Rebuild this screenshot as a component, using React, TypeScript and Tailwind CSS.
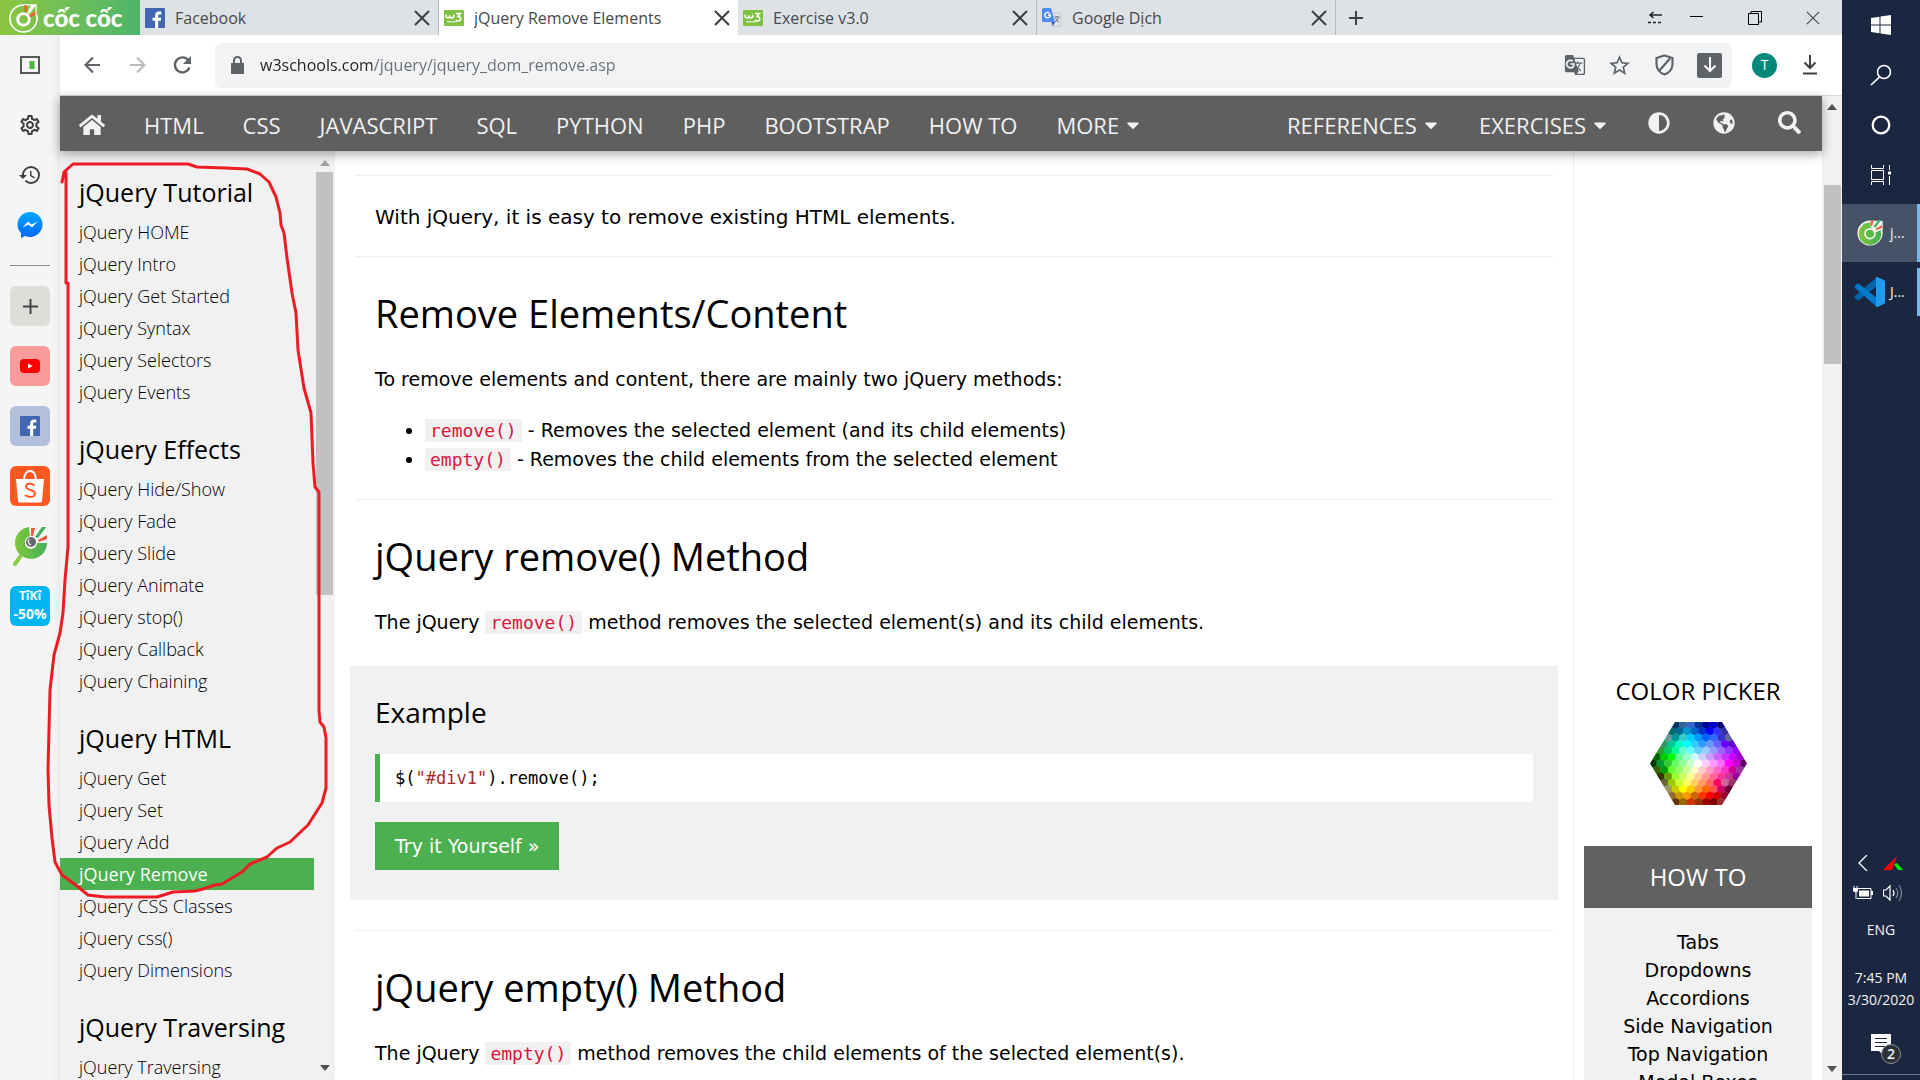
import React from "react";
import { FaHome, FaAdjust, FaGlobeAmericas, FaSearch, FaCaretDown } from "react-icons/fa";
import { MdGTranslate, MdStarBorder, MdHistory, MdOutlineSettings } from "react-icons/md";

const UI = "font-['Open_Sans','Noto_Sans',sans-serif]";
const BODY = "font-['DejaVu_Sans',sans-serif]";

const pickerRows = [
  "003366 336699 3366CC 003399 000099 0000CC 000066",
  "006666 006699 0099CC 0066CC 0033CC 0000FF 3333FF 333399",
  "669999 009999 33CCCC 00CCFF 0099FF 0066FF 3366FF 3333CC 666699",
  "339966 00CC99 00FFCC 00FFFF 33CCFF 3399FF 6699FF 6666FF 6600FF 6600CC",
  "339933 00CC66 00FF99 66FFCC 66FFFF 66CCFF 99CCFF 9999FF 9966FF 9933FF 9900FF",
  "006600 00CC00 00FF00 66FF99 99FFCC CCFFFF CCCCFF CC99FF CC66FF CC33FF CC00FF 9900CC",
  "003300 009933 33CC33 66FF66 99FF99 CCFFCC FFFFFF FFCCFF FF99FF FF66FF FF00FF CC00CC 660066",
  "336600 009900 66FF33 99FF66 CCFF99 FFFFCC FFCCCC FF99CC FF66CC FF33CC CC0099 993399",
  "333300 669900 99FF33 CCFF66 FFFF99 FFCC99 FF9999 FF6699 FF3399 CC3399 990099",
  "666633 99CC00 CCFF33 FFFF66 FFCC66 FF9966 FF6666 FF0066 CC6699 993366",
  "999966 CCCC00 FFFF00 FFCC00 FF9933 FF6600 FF5050 CC0066 660033",
  "996633 CC9900 FF9900 CC6600 FF3300 FF0000 CC0000 990033",
  "663300 996600 CC3300 993300 990000 800000 993333",
].map((r) => r.split(" "));

function ColorHexagon() {
  const w = 7.6;
  const h = 6.45;
  const cells: React.ReactNode[] = [];
  pickerRows.forEach((row, r) => {
    const cy = 41.5 + (r - 6) * h;
    row.forEach((c, i) => {
      const cx = 48.5 + (i - (row.length - 1) / 2) * w;
      cells.push(
        <polygon
          key={r + "-" + i}
          fill={"#" + c}
          points={`${cx},${cy - 4.5} ${cx + 4},${cy - 2.2} ${cx + 4},${cy + 2.2} ${cx},${cy + 4.5} ${cx - 4},${cy + 2.2} ${cx - 4},${cy - 2.2}`}
        />
      );
    });
  });
  return (
    <svg width="97" height="83" viewBox="0 0 97 83" aria-hidden="true">
      <defs>
        <clipPath id="hexClip">
          <polygon points="25,0 72,0 97,41.5 72,83 25,83 0,41.5" />
        </clipPath>
      </defs>
      <g clipPath="url(#hexClip)">{cells}</g>
    </svg>
  );
}

function CocMark({ size = 31 }: { size?: number }) {
  return (
    <svg width={size} height={size} viewBox="0 0 32 32" className="shrink-0" aria-hidden="true">
      <circle cx="16" cy="17" r="14" fill="none" stroke="#fff" strokeWidth="1.6" />
      <path d="M17 3 30 2 30 14 20 15Z" fill="#86c846" />
      <circle cx="16" cy="18" r="6" fill="none" stroke="#fff" strokeWidth="3" />
      <path d="M17 3l3 0-1 8-2-1z" fill="#f05a28" />
      <path d="M24 3l5 0-7 9-2-1z" fill="#fff" />
      <path d="M29 9l1 3-7 4-1-2z" fill="#f05a28" />
      <path d="M18 3H29V14" fill="none" stroke="#fff" strokeWidth="1.2" />
    </svg>
  );
}

function CocEye({ size, handle }: { size: number; handle?: boolean }) {
  return (
    <svg width={size} height={size} viewBox="0 0 40 40" className="shrink-0" aria-hidden="true">
      <defs>
        <linearGradient id="cocG" x1="0" x2="1">
          <stop offset="0" stopColor="#7fc63c" />
          <stop offset="1" stopColor="#45b05a" />
        </linearGradient>
      </defs>
      {handle ? (
        <>
          <path d="M12 28 5 38" stroke="#8ccb45" strokeWidth="4" strokeLinecap="round" />
          <path d="M19 1A16 16 0 1 0 37 17L27 17A6 6 0 1 1 20 11Z" fill="url(#cocG)" />
          <circle cx="21" cy="16" r="6" fill="#fff" />
          <circle cx="21" cy="16" r="5" fill="#666a70" />
          <path d="M19 13a4 4 0 0 0 2 6" stroke="#ddd" fill="none" strokeWidth="1.5" />
        </>
      ) : (
        <>
          <path d="M21 2A18 18 0 1 0 38 19L37 3Z" fill="#f4f4ee" />
          <circle cx="20" cy="21" r="16" fill="url(#cocG)" />
          <path d="M21 11 20 3H38V15L28 19Z" fill="#f4f4ee" />
          <circle cx="20" cy="21" r="7" fill="#5cb947" stroke="#f4f4ee" strokeWidth="2.5" />
        </>
      )}
      <path d="M21 2h4l-2 8h-2z" fill="#f05a3c" />
      <path d="M32 1h4l-8 11-3-1z" fill="#3fae5a" />
      <path d="M37 9v4l-8 3-1-2z" fill="#f05a3c" />
    </svg>
  );
}

function FacebookLogo() {
  return (
    <svg width="20" height="20" viewBox="0 0 20 20" className="shrink-0" aria-hidden="true">
      <rect width="20" height="20" rx="1" fill="#4267b2" />
      <path d="M13.2 20v-7.3h2.6l.4-3h-3V7.9c0-.9.3-1.4 1.5-1.4h1.6V3.7c-.3 0-1.2-.1-2.3-.1-2.3 0-3.9 1.4-3.9 4v2.1H7.5v3h2.6V20z" fill="#fff" />
    </svg>
  );
}

function W3Logo() {
  return (
    <svg width="20" height="16" viewBox="0 0 20 16" className="shrink-0" aria-hidden="true">
      <rect width="20" height="16" rx="1" fill="#7fc242" />
      <path d="M2 4.5v1.8c0 2 3.7 2 3.7 0V5.2v1c0 2.1 4 2.1 4 0V4.5M12 3.5h4.5L14 6.5c3.500 0 3.600 4.500.5 4.500-1.200 0-2-.5-2.500-1.200" fill="none" stroke="#fff" strokeWidth="1.5" />
      <path d="M3 11.8h10" stroke="#fff" strokeWidth="1" />
    </svg>
  );
}

function TranslateLogo() {
  return (
    <svg width="20" height="20" viewBox="0 0 20 20" className="shrink-0" aria-hidden="true">
      <path d="M8 5h11v13h-9z" fill="#dfe1e3" stroke="#c5c8cc" />
      <path d="M0 1.5Q0 0 1.5 0H9l4 14H1.5Q0 14 0 12.5z" fill="#4e8cf5" />
      <path d="M9.5 14H13l-2 4z" fill="#3b50b5" />
      <path d="M8 5.5A2.8 2.8 0 1 0 8.5 7H6" fill="none" stroke="#fff" strokeWidth="1.3" />
      <path d="M12.5 9h5M15 8v1M16.5 9.5q-1 3-3.5 4.5M13.5 10.5q1 2.5 3.5 3.5" stroke="#6d7378" fill="none" />
    </svg>
  );
}

function Close({ size = 16, w = 2 }: { size?: number; w?: number }) {
  return (
    <svg width={size} height={size} viewBox="0 0 16 16" aria-hidden="true">
      <path d="M1 1 15 15M15 1 1 15" stroke="#3c4043" strokeWidth={w} />
    </svg>
  );
}

function Tab({ icon, label, active }: { icon: React.ReactNode; label: string; active?: boolean }) {
  return (
    <div className={"flex h-full w-[299px] shrink-0 items-center pl-[5px] pr-2 " + (active ? "bg-white" : "border-r border-[#9a9da1]/60")}>
      {icon}
      <a href="#tab" className="ml-2.5 flex-1 truncate text-base leading-6 text-[#45494d]">{label}</a>
      <button type="button" aria-label={"Close " + label}>
        <Close />
      </button>
    </div>
  );
}

function TabStrip() {
  return (
    <div className="flex h-[35px] shrink-0 items-center bg-[#dee1e6]">
      <a href="#home" className="flex h-full w-[140px] shrink-0 items-center gap-1 bg-linear-to-r from-[#8cc63f] to-[#4cb56a] pl-2 text-white">
        <CocMark />
        <span className="font-['Lato',sans-serif] text-2xl leading-8 font-black whitespace-nowrap">cốc cốc</span>
      </a>
      <Tab icon={<FacebookLogo />} label="Facebook" />
      <Tab icon={<W3Logo />} label="jQuery Remove Elements" active />
      <Tab icon={<W3Logo />} label="Exercise v3.0" />
      <Tab icon={<TranslateLogo />} label="Google Dịch" />
      <button type="button" aria-label="New tab" className="ml-3">
        <svg width="16" height="16" viewBox="0 0 16 16"><path d="M8 1v14M1 8h14" stroke="#3c4043" strokeWidth="2" /></svg>
      </button>
      <div className="ml-auto flex items-center gap-11 pr-[22px]">
        <button type="button" aria-label="Dock" className="-mr-4">
          <svg width="14" height="14" viewBox="0 0 14 14"><path d="M2 4h12M5.500 1 2 4l3.500 3M0 11.500h3M5 11.500h3M10 11.500h3" stroke="#222" strokeWidth="1.5" fill="none" /></svg>
        </button>
        <button type="button" aria-label="Minimize">
          <svg width="14" height="14" viewBox="0 0 14 14"><path d="M0 5.500h13" stroke="#000" /></svg>
        </button>
        <button type="button" aria-label="Restore">
          <svg width="14" height="14" viewBox="0 0 14 14"><path d="M.5 2.500h10v11H.5zM3 2V.5h10.500V11H11" stroke="#000" fill="none" /></svg>
        </button>
        <button type="button" aria-label="Close window">
          <Close size={14} w={1.2} />
        </button>
      </div>
    </div>
  );
}

function Toolbar() {
  const tool = "flex h-[25px] w-[25px] items-center justify-center";
  return (
    <div className="flex h-[61px] shrink-0 items-center border-b border-[#d8d8d8] bg-white pr-[25px]">
      <button type="button" aria-label="Back" className="ml-6">
        <svg width="16" height="18" viewBox="0 0 16 18"><path d="M16 9H2M9 1.5 1.5 9 9 16.5" stroke="#5f6368" strokeWidth="2.2" fill="none" /></svg>
      </button>
      <button type="button" aria-label="Forward" className="ml-[30px]">
        <svg width="16" height="18" viewBox="0 0 16 18"><path d="M0 9h14M7 1.5 14.5 9 7 16.5" stroke="#babcbe" strokeWidth="2.2" fill="none" /></svg>
      </button>
      <button type="button" aria-label="Reload" className="ml-[27px]">
        <svg width="19" height="20" viewBox="0 0 19 20"><path d="M16.5 12.5A7.5 7.5 0 1 1 15.5 5.5" stroke="#5f6368" strokeWidth="2.3" fill="none" /><path d="M18 1v8h-8z" fill="#5f6368" /></svg>
      </button>
      <div className="ml-[23px] flex h-[45px] flex-1 items-center rounded-md bg-[#f1f3f4] pl-4 pr-2.5">
        <svg width="13" height="18" viewBox="0 0 13 18" className="shrink-0" aria-hidden="true">
          <path d="M0 7h13v11H0z" fill="#5f6368" />
          <path d="M3 8V4.500a3.500 3.500 0 0 1 7 0V8" fill="none" stroke="#5f6368" strokeWidth="2" />
        </svg>
        <input
          aria-label="Address"
          readOnly
          value="w3schools.com/jquery/jquery_dom_remove.asp"
          className="ml-4 flex-1 bg-[linear-gradient(90deg,#202124_112px,#6a6e73_112px)] bg-clip-text text-base leading-6 text-transparent outline-none"
        />
        <div className="flex items-center gap-5 text-[#5f6368]">
          <button type="button" aria-label="Translate" className={tool}><MdGTranslate size={22} /></button>
          <button type="button" aria-label="Bookmark" className={tool}><MdStarBorder size={25} /></button>
          <button type="button" aria-label="Shield" className={tool}>
            <svg width="19" height="22" viewBox="0 0 19 22"><path d="M9.5 1.5 17.5 4v6c0 5-3.5 9-8 10.5C5 19 1.500 15 1.500 10V4zM15 4.500 4 17" fill="none" stroke="#5f6368" strokeWidth="2.2" /></svg>
          </button>
          <button type="button" aria-label="Save media" className={tool + " rounded-xs bg-[#5f6368]"}>
            <svg width="14" height="16" viewBox="0 0 14 16"><path d="M7 0v14M1.500 8.500 7 14l5.500-5.500" stroke="#fff" strokeWidth="2" fill="none" /></svg>
          </button>
        </div>
      </div>
      <button type="button" className="ml-5 flex h-[25px] w-[25px] items-center justify-center rounded-full bg-[#00897b] text-sm text-white">T</button>
      <button type="button" aria-label="Downloads" className="ml-[26px]">
        <svg width="14" height="20" viewBox="0 0 14 20"><path d="M7 0v13M1.5 7.5 7 13l5.500-5.500M0 18.500h14" stroke="#3c4043" strokeWidth="2" fill="none" /></svg>
      </button>
    </div>
  );
}

function AppRail() {
  const tile = "flex h-10 w-10 items-center justify-center rounded-md";
  return (
    <nav aria-label="Apps" className="flex w-[60px] shrink-0 flex-col items-center bg-[#f5f5f5] pt-5 text-[#3c4043] shadow-[inset_-8px_0_6px_-6px_#e6e6e6]">
      <button type="button" aria-label="Toggle sidebar" className="flex h-5 items-center">
        <svg width="20" height="18" viewBox="0 0 20 18"><path d="M1 1h18v16H1z" fill="none" stroke="#55585b" strokeWidth="2" /><path d="M9.5 5h5v8h-5z" fill="#4fb53c" /></svg>
      </button>
      <button type="button" aria-label="Settings" className="mt-[38px] h-6"><MdOutlineSettings size={24} /></button>
      <button type="button" aria-label="History" className="mt-[26px] h-6"><MdHistory size={24} /></button>
      <button type="button" aria-label="Messenger" className="mt-[25px]">
        <svg width="26" height="26" viewBox="0 0 26 26">
          <defs><linearGradient id="msg" x1="0" x2="0" y1="0" y2="1"><stop offset="0" stopColor="#00a8ff" /><stop offset="1" stopColor="#0068ff" /></linearGradient></defs>
          <circle cx="13" cy="12.5" r="12.5" fill="url(#msg)" />
          <path d="M4 18v8l6-3z" fill="#0072ff" />
          <path d="M5.5 15.5 11 9.5l3.500 3 6-3-5.500 6-3.500-3z" fill="#fff" />
        </svg>
      </button>
      <hr className="mt-[27px] h-px w-10 border-0 bg-[#8a8a8a]" />
      <div className="mt-5 flex flex-col gap-5">
        <button type="button" aria-label="Add" className={tile + " bg-[#deddda]"}>
          <svg width="15" height="15" viewBox="0 0 15 15"><path d="M7.5 0v15M0 7.5h15" stroke="#444" strokeWidth="2" /></svg>
        </button>
        <a href="#youtube" aria-label="YouTube" className={tile + " bg-[#f99b9b]"}>
          <svg width="20" height="14" viewBox="0 0 20 14"><rect width="20" height="14" rx="4" fill="#f00" /><path d="M8 4.500v5l4.500-2.500z" fill="#fff" /></svg>
        </a>
        <a href="#facebook" aria-label="Facebook" className={tile + " bg-[#b3c0dc]"}><FacebookLogo /></a>
        <a href="#shopee" aria-label="Shopee" className={tile + " bg-[#ff5722]"}>
          <svg width="30" height="34" viewBox="0 0 30 34">
            <path d="M1 10h28l-2 22q0 1.500-1.500 1.500h-21Q3 33.500 3 32z" fill="#fff" />
            <path d="M9 10Q10 2 15 2t6 8" fill="none" stroke="#fff" strokeWidth="2" />
            <path d="M19.500 16.500Q17 14.500 14.500 14.500 11 15 11 17.500c0 4 9 3 9 7 0 4.500-7 4-10 1.500" fill="none" stroke="#ff5722" strokeWidth="2" />
          </svg>
        </a>
        <a href="#coccoc" aria-label="Search" className="flex h-10 w-10 items-center justify-center"><CocEye size={40} handle /></a>
        <a href="#tiki" className={tile + " flex-col bg-[#00b5f1] font-bold text-white"}>
          <span className="text-xs leading-4">TîKî</span>
          <span className="text-sm leading-5">-50%</span>
        </a>
      </div>
    </nav>
  );
}

const topics = ["HTML", "CSS", "JAVASCRIPT", "SQL", "PYTHON", "PHP", "BOOTSTRAP", "HOW TO"];

function SiteNav() {
  return (
    <nav className="relative z-10 flex h-[55px] shrink-0 items-center bg-[#5f5f5f] pl-[19px] pr-[21px] pt-0.5 text-[22px] leading-7 whitespace-nowrap text-[#f1f1f1] shadow-[0_3px_10px_rgba(0,0,0,0.35)]">
      <a href="#home" aria-label="Home"><FaHome size={26} /></a>
      <div className="ml-[39px] flex gap-[39px]">
        {topics.map((t) => <a key={t} href="#topic">{t}</a>)}
        <a href="#more" className="flex items-center gap-1">MORE <FaCaretDown size={20} /></a>
      </div>
      <div className="ml-auto flex items-center gap-[38px]">
        <a href="#references" className="flex items-center gap-1">REFERENCES <FaCaretDown size={20} /></a>
        <a href="#exercises" className="flex items-center gap-1">EXERCISES <FaCaretDown size={20} /></a>
        <div className="flex items-center gap-[43px] pb-1">
          <button type="button" aria-label="Contrast"><FaAdjust size={22} /></button>
          <button type="button" aria-label="Language"><FaGlobeAmericas size={22} /></button>
          <button type="button" aria-label="Search"><FaSearch size={23} /></button>
        </div>
      </div>
    </nav>
  );
}

const groups = [
  { title: "jQuery Tutorial", items: ["HOME", "Intro", "Get Started", "Syntax", "Selectors", "Events"] },
  { title: "jQuery Effects", items: ["Hide/Show", "Fade", "Slide", "Animate", "stop()", "Callback", "Chaining"] },
  { title: "jQuery HTML", items: ["Get", "Set", "Add", "Remove", "CSS Classes", "css()", "Dimensions"] },
  { title: "jQuery Traversing", items: ["Traversing"] },
];

function Arrow({ up, color }: { up?: boolean; color: string }) {
  return (
    <svg width="10" height="6" viewBox="0 0 10 6" className="shrink-0" aria-hidden="true">
      <path d={up ? "M0 6 5 0l5 6z" : "M0 0h10L5 6z"} fill={color} />
    </svg>
  );
}

function SideNav() {
  return (
    <aside className="flex w-[275px] shrink-0 overflow-hidden bg-[#f1f1f1]">
      <div className="w-[254px]">
        {groups.map((g) => (
          <section key={g.title} className="pt-[25px]">
            <h2 className="mb-2 pl-[19px] text-[25px] leading-8">{g.title}</h2>
            <ul>
              {g.items.map((i) => (
                <li key={i}>
                  <a href="#lesson" className={"block pl-[19px] text-lg leading-8 " + (i === "Remove" ? "bg-[#4caf50] font-normal text-white" : "font-light text-black")}>
                    {"jQuery " + i}
                  </a>
                </li>
              ))}
            </ul>
          </section>
        ))}
      </div>
      <div className="ml-0.5 flex w-[17px] flex-col items-center py-[9px]">
        <Arrow up color="#a3a3a3" />
        <div className="mt-1.5 h-[423px] w-full bg-[#c1c1c1]" />
        <div className="mt-auto"><Arrow color="#505050" /></div>
      </div>
    </aside>
  );
}

function Code({ children }: { children: React.ReactNode }) {
  return (
    <code className="bg-[#f1f1f1] px-[5px] py-px font-['DejaVu_Sans_Mono',monospace] text-lg leading-5 text-[#dc143c]">{children}</code>
  );
}

function Rule() {
  return <hr className="mx-5 border-[#eeeeee]" />;
}

function Article() {
  const p = "px-10 text-[19px] leading-7";
  const h = "px-10 text-[38px] leading-[56px] " + UI;
  return (
    <main className={"min-w-0 flex-1 overflow-hidden pt-6 text-black " + BODY}>
      <Rule />
      <p className="mt-[27px] mb-[25px] px-10 text-xl leading-7">With jQuery, it is easy to remove existing HTML elements.</p>
      <Rule />
      <h1 className={h + " mt-7"}>Remove Elements/Content</h1>
      <p className={p + " mt-6"}>To remove elements and content, there are mainly two jQuery methods:</p>
      <ul className="mt-[23px] mb-[25px] list-disc pl-[90px] text-[19px] leading-[29px]">
        <li><Code>remove()</Code> - Removes the selected element (and its child elements)</li>
        <li><Code>empty()</Code> - Removes the child elements from the selected element</li>
      </ul>
      <Rule />
      <h1 className={h + " mt-7"}>jQuery remove() Method</h1>
      <p className={p + " mt-6"}>The jQuery <Code>remove()</Code> method removes the selected element(s) and its child elements.</p>
      <section className="mx-[15px] mt-[30px] mb-[30px] bg-[#f1f1f1] px-[25px] pt-7 pb-[30px]">
        <h3 className={"text-[28px] leading-9 " + UI}>Example</h3>
        <pre className="mt-6 border-l-5 border-[#4caf50] bg-white px-[15px] py-3 font-['DejaVu_Sans_Mono',monospace] text-[17px] leading-6">$(<span className="text-[#a52a2a]">"#div1"</span>).remove();</pre>
        <a href="#tryit" className="mt-5 inline-block bg-[#4caf50] px-5 py-2.5 align-top text-[19px] leading-7 text-white">Try it Yourself »</a>
      </section>
      <Rule />
      <h1 className={h + " mt-7"}>jQuery empty() Method</h1>
      <p className={p + " mt-6"}>The jQuery <Code>empty()</Code> method removes the child elements of the selected element(s).</p>
    </main>
  );
}

const howTo = ["Tabs", "Dropdowns", "Accordions", "Side Navigation", "Top Navigation", "Modal Boxes"];

function RightColumn() {
  return (
    <aside className="flex w-[249px] shrink-0 flex-col items-center overflow-hidden border-l border-[#eeeeee] px-2.5 pt-[524px]">
      <a href="#picker" className="text-2xl leading-8 whitespace-nowrap">COLOR PICKER</a>
      <div className="mt-[15px]"><ColorHexagon /></div>
      <section className="mt-[41px] w-full shrink-0 bg-[#f1f1f1] text-center">
        <h2 className="bg-[#616161] py-[15px] text-2xl leading-8 text-white">HOW TO</h2>
        <ul className={"pt-5 text-[19px] leading-7 " + BODY}>
          {howTo.map((t) => <li key={t}><a href="#howto">{t}</a></li>)}
        </ul>
      </section>
    </aside>
  );
}

function Taskbar() {
  return (
    <aside className="flex w-[78px] shrink-0 flex-col items-center bg-[#1b2741] text-[#f2f3f5]">
      <button type="button" aria-label="Start" className="mt-[15px]">
        <svg width="20" height="20" viewBox="0 0 20 20"><path d="M0 3 8.5 1.8V9.5H0zM9.5 1.600 20 0v9.500H9.500zM0 10.500h8.500v7.700L0 17zM9.500 10.500H20V20L9.500 18.400z" fill="#fff" /></svg>
      </button>
      <button type="button" aria-label="Search" className="mt-[29px]">
        <svg width="22" height="22" viewBox="0 0 22 22"><circle cx="14" cy="8" r="6.5" fill="none" stroke="#fff" strokeWidth="1.5" /><path d="M9.5 13 1 21" stroke="#fff" strokeWidth="1.7" /></svg>
      </button>
      <button type="button" aria-label="Cortana" className="mt-[29px]">
        <svg width="20" height="20" viewBox="0 0 20 20"><circle cx="10" cy="10" r="8.3" fill="none" stroke="#fff" strokeWidth="2.3" /></svg>
      </button>
      <button type="button" aria-label="Task view" className="mt-[30px]">
        <svg width="20" height="20" viewBox="0 0 20 20"><path d="M.5 0v3.500h12V0M.5 20v-3.500h12V20M.5 5.500h12v9H.5zM18.500 0v5M18.500 11v9" stroke="#fff" fill="none" /><path d="M17 6.500h3v3h-3z" fill="#fff" /></svg>
      </button>
      <button type="button" className="mt-[19px] flex h-[58px] w-full items-center gap-1.5 border-r-3 border-[#76b9ed] bg-[#475266] pl-3.5 text-sm">
        <CocEye size={28} />j...
      </button>
      <button type="button" className="mt-1.5 flex h-12 w-full items-center gap-1 border-r-3 border-[#76b9ed] pl-3 text-sm">
        <svg width="32" height="32" viewBox="0 0 32 32" className="shrink-0">
          <path d="M23 1 1 20q-1 1 0 2l2 2q1 1 2 0L23 10z" fill="#0065a9" />
          <path d="M23 31 1 12q-1-1 0-2l2-2q1-1 2 0l18 14z" fill="#007acc" />
          <path d="M22 1h1l7 3q1 .5 1 2v20q0 1.500-1 2l-7 3h-1z" fill="#1f9cf0" />
        </svg>
        J...
      </button>
      <div className="mt-auto flex w-full items-center gap-[15px] pl-4">
        <svg width="10" height="16" viewBox="0 0 10 16" aria-hidden="true"><path d="M9 0 1 8l8 8" fill="none" stroke="#fff" strokeWidth="1.3" /></svg>
        <svg width="20" height="16" viewBox="0 0 20 16" aria-hidden="true"><path d="M0 15 14 1 9 15z" fill="#f00" /><path d="M11 9l3-1 6 7h-5z" fill="#0e0" /></svg>
      </div>
      <div className="mt-[13px] flex w-full items-center gap-2.5 pl-[11px]">
        <svg width="20" height="14" viewBox="0 0 20 14" aria-hidden="true"><path d="M5 2.500h13v10H4" fill="none" stroke="#fff" /><path d="M6 4.500h10v6H6zM18 5h2v4h-2zM0 2h5v3L3.500 6.500V13h-1V6.500L0 5z" fill="#fff" /><path d="M1 0v3M4 0v3" stroke="#fff" /></svg>
        <svg width="20" height="18" viewBox="0 0 20 18" aria-hidden="true"><path d="M.5 6H3l4-4v14l-4-4H.5z" fill="none" stroke="#fff" strokeWidth="1.2" /><path d="M10 6q2 3 0 6" fill="none" stroke="#fff" strokeWidth="1.2" /><path d="M13 4q3.500 5 0 10M16 1q5 8 0 16" fill="none" stroke="#7e8798" strokeWidth="1.2" /></svg>
      </div>
      <span className="mt-[17px] text-sm leading-[22px]">ENG</span>
      <span className="mt-[26px] text-sm leading-[22px] whitespace-nowrap">7:45 PM</span>
      <span className="text-sm leading-[22px] whitespace-nowrap">3/30/2020</span>
      <button type="button" aria-label="2 notifications" className="relative mt-[23px] mb-[18px] ml-0.5">
        <svg width="22" height="22" viewBox="0 0 22 22"><path d="M0 0h20v17h-7v5l-5-5H0z" fill="#fff" /><path d="M4 4.500h12M4 8.500h12M4 12.500h12" stroke="#1b2741" /></svg>
        <span className="absolute top-2.5 left-2.5 flex h-5 w-5 items-center justify-center rounded-full border border-[#8b8f96] bg-[#2d3138] text-sm leading-4 font-semibold">2</span>
      </button>
      <div className="mb-[5px] h-px w-full shrink-0 bg-[#6c7688]" />
    </aside>
  );
}

function RedOutline() {
  return (
    <svg width="335" height="910" viewBox="0 0 335 910" className="pointer-events-none absolute top-0 left-0 z-20" aria-hidden="true">
      <path
        d="M62 182 64 172 73 164H188L197 167 225 168 247 169 260 174 269 182 276 197 280 213 281 225 284 233 287 258 292 293 296 313 298 350 304 388 311 413 313 463 315 487 319 492V710L320 722 324 727 326 738V788L322 803 308 825 290 842 277 848 267 857 250 864 242 872 222 884 215 885 203 889 195 891 173 892 157 897H105L88 895 77 886 62 875 55 862 52 838 49 805 48 770 50 690 54 655 60 633 63 613 65 580 68 547V283H66V172"
        fill="none"
        stroke="#ed1c24"
        strokeWidth="3"
        strokeLinejoin="round"
        strokeLinecap="round"
      />
    </svg>
  );
}

export default function App() {
  return (
    <div className={"relative flex h-screen overflow-hidden bg-white text-black " + UI}>
      <div className="flex min-w-0 flex-1 flex-col">
        <TabStrip />
        <div className="flex min-h-0 flex-1">
          <AppRail />
          <div className="flex min-w-0 flex-1 flex-col">
            <Toolbar />
            <div className="flex min-h-0 flex-1">
              <div className="flex min-w-0 flex-1 flex-col">
                <SiteNav />
                <div className="flex min-h-0 flex-1">
                  <SideNav />
                  <Article />
                  <RightColumn />
                </div>
              </div>
              <div className="flex w-5 shrink-0 flex-col items-center bg-[#f1f1f1] py-2">
                <Arrow up color="#505050" />
                <div className="mt-[75px] h-[179px] w-[17px] bg-[#c1c1c1]" />
                <div className="mt-auto"><Arrow color="#505050" /></div>
              </div>
            </div>
          </div>
        </div>
      </div>
      <Taskbar />
      <RedOutline />
    </div>
  );
}
